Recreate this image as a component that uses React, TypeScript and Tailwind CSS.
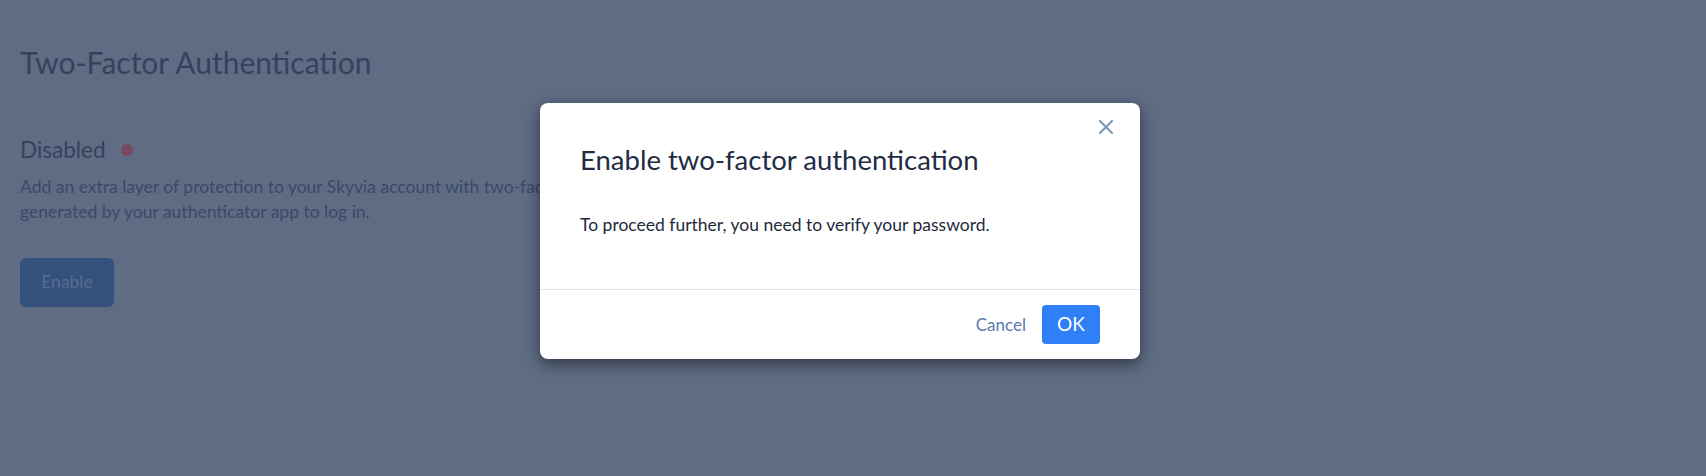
import React from "react";

function CloseIcon() {
  return (
    <svg width="14" height="14" viewBox="0 0 14 14" fill="none">
      <path d="M1 1L13 13M13 1L1 13" stroke="#7c93b9" strokeWidth="2" strokeLinecap="square" />
    </svg>
  );
}

function EnableDialog() {
  return (
    <div className="absolute left-[540px] top-[103px] w-[600px] rounded-lg bg-white shadow-[0_5px_15px_rgba(0,0,0,0.5)]">
      <button className="absolute right-[27px] top-[17px] p-0">
        <CloseIcon />
      </button>
      <div className="px-10 pt-10 pb-[52px]">
        <h2 className="text-[27.5px] leading-[34px] text-[#1f2c42]">Enable two-factor authentication</h2>
        <p className="mt-9 text-[17.5px] leading-6 text-[#1e2a3c]">
          To proceed further, you need to verify your password.
        </p>
      </div>
      <div className="flex items-center justify-end gap-4 border-t border-[#dfe5ee] px-10 py-[15px]">
        <button className="text-[17px] text-[#5a79ac]">Cancel</button>
        <button className="h-[39px] w-[58px] rounded bg-[#2e7ff8] text-[19px] text-white">OK</button>
      </div>
    </div>
  );
}

export default function App() {
  return (
    <div className="relative h-[476px] w-full overflow-hidden bg-[#5f6c84] font-['Lato',sans-serif]">
      <div className="px-5 pt-[44px]">
        <h1 className="text-[30px] leading-9 text-[#34435d]">Two-Factor Authentication</h1>
        <div className="mt-[54px] flex items-center gap-[15px]">
          <span className="text-[22.5px] leading-8 text-[#34435d]">Disabled</span>
          <span className="h-3 w-3 rounded-full bg-[#784a61]" />
        </div>
        <p className="mt-2 text-[17.5px] leading-[25px] text-[#3a4a66]">
          Add an extra layer of protection to your Skyvia account with two-factor authentication. You will need to enter a code
          <br />
          generated by your authenticator app to log in.
        </p>
        <button className="mt-[34px] h-[49px] w-[94px] rounded-md bg-[#34507d] text-[17.5px] text-[#586c8e]">
          Enable
        </button>
      </div>
      <EnableDialog />
    </div>
  );
}
